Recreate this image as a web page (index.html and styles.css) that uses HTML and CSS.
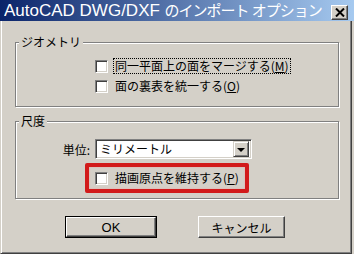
FILE: index.html
```html
<!DOCTYPE html>
<html>
  <head>
    <meta charset="utf-8">
    <title>AutoCAD DWG/DXF のインポート オプション</title>
    <link rel="stylesheet" href="styles.css">
  </head>
  <body>
    <div class="titlebar">
      <span class="caption">AutoCAD DWG/DXF <span class="jp">のインポート オプション</span></span>
      <span class="close">
        <svg width="10" height="9" viewBox="0 0 10 9"><path d="M1 0.5 L9 8.5 M9 0.5 L1 8.5" stroke="#000" stroke-width="2"/></svg>
      </span>
    </div>
    <div class="frame">
      <fieldset class="group g1">
        <legend>ジオメトリ</legend>
        <div class="row">
          <span class="check"></span>
          <span class="label focus">同一平面上の面をマージする(<u>M</u>)</span>
        </div>
        <div class="row">
          <span class="check"></span>
          <span class="label">面の裏表を統一する(<u>O</u>)</span>
        </div>
      </fieldset>
      <fieldset class="group g2">
        <legend>尺度</legend>
        <div class="unit">
          <span class="unit-label">単位:</span>
          <span class="select">
            <span class="value">ミリメートル</span>
            <span class="drop"><span class="arrow"></span></span>
          </span>
        </div>
        <div class="mark">
          <div class="row">
            <span class="check"></span>
            <span class="label">描画原点を維持する(<u>P</u>)</span>
          </div>
        </div>
      </fieldset>
      <div class="buttons">
        <span class="btn default"><span class="face">OK</span></span>
        <span class="btn cancel"><span class="face">キャンセル</span></span>
      </div>
    </div>
  </body>
</html>
```

FILE: styles.css
```css
body {
  margin:0;
  width:354px;
  height:254px;
  overflow:hidden;
  background:#d4d0c8;
  font-family:"Noto Sans CJK JP", "Liberation Sans", sans-serif;
  font-size:12px;
  color:#000;
}
.titlebar {
  height:21px;
  display:flex;
  align-items:center;
  background:linear-gradient(to right, #0a246a, #a6caf0);
  padding:0 6px 0 4px;
}
.caption {
  flex:1;
  color:#fff;
  font-family:"Liberation Sans", "Noto Sans CJK JP", sans-serif;
  font-size:17px;
  line-height:21px;
  white-space:nowrap;
  overflow:hidden;
}
.caption .jp {
  font-size:15px;
  letter-spacing:-1px;
}
.close {
  width:17px;
  height:15px;
  margin-top:4px;
  box-sizing:border-box;
  background:#d4d0c8;
  border:1px solid;
  border-color:#fff #404040 #404040 #fff;
  box-shadow:inset -1px -1px #808080;
  display:flex;
  align-items:center;
  justify-content:center;
}
.frame {
  width:352px;
  height:233px;
  box-sizing:border-box;
  border-left:1px solid #d4d0c8;
  border-right:1px solid #404040;
  border-bottom:1px solid #404040;
  box-shadow:inset 1px 0 #fff, inset -1px -1px #808080;
  display:flow-root;
}
.group {
  margin:14px 12px 0 14px;
  padding:0 0 12px 0;
  border:1px solid #808080;
  box-shadow:inset 1px 1px #fff, 1px 1px #fff;
}
.group legend {
  margin-left:3px;
  padding:0 2px;
  line-height:14px;
  background:#d4d0c8;
}
.g1 {
  padding-top:9px;
}
.g1 .row {
  margin-left:79px;
}
.g2 {
  margin-top:7px;
  padding:11px 0 5px 0;
}
.row {
  display:flex;
  align-items:center;
  height:16px;
}
.row + .row {
  margin-top:4px;
}
.check {
  width:13px;
  height:13px;
  box-sizing:border-box;
  background:#fff;
  border:1px solid;
  border-color:#808080 #fff #fff #808080;
  box-shadow:inset 1px 1px #404040, inset -1px -1px #d4d0c8;
  margin-right:5px;
}
.label {
  line-height:14px;
  padding:0 1px;
  border:1px solid transparent;
  white-space:nowrap;
}
.label.focus {
  border:1px dotted #000;
}
.unit {
  display:flex;
  align-items:center;
}
.unit-label {
  width:73px;
  margin-left:1px;
  margin-right:5px;
  text-align:right;
}
.select {
  width:157px;
  height:20px;
  box-sizing:border-box;
  background:#fff;
  border:1px solid;
  border-color:#808080 #fff #fff #808080;
  box-shadow:inset 1px 1px #404040, inset -1px -1px #d4d0c8;
  display:flex;
  align-items:center;
  justify-content:space-between;
  padding:2px;
}
.value {
  padding-left:2px;
  line-height:14px;
}
.drop {
  width:16px;
  height:16px;
  box-sizing:border-box;
  background:#d4d0c8;
  border:1px solid;
  border-color:#d4d0c8 #404040 #404040 #d4d0c8;
  box-shadow:inset 1px 1px #fff, inset -1px -1px #808080;
  display:flex;
  align-items:center;
  justify-content:center;
}
.arrow {
  width:0;
  height:0;
  border-left:4px solid transparent;
  border-right:4px solid transparent;
  border-top:4px solid #000;
  margin-top:1px;
}
.mark {
  width:164px;
  height:30px;
  box-sizing:border-box;
  margin:4px 0 0 69px;
  border:4px solid #d21a1a;
  border-radius:2px;
  box-shadow:inset 0 0 2px #f0a0a0;
  padding:0 0 0 6px;
  display:flex;
  align-items:center;
}
.buttons {
  display:flex;
  margin:17px 0 0 64px;
  gap:41px;
}
.btn {
  height:22px;
  box-sizing:border-box;
  display:flex;
}
.btn .face {
  flex:1;
  display:flex;
  align-items:center;
  justify-content:center;
  border:1px solid;
  border-color:#fff #404040 #404040 #fff;
  box-shadow:inset -1px -1px #808080;
  background:#d4d0c8;
}
.default {
  width:92px;
  border:1px solid #000;
  font-family:"Liberation Sans", sans-serif;
  font-size:13px;
}
.cancel {
  width:87px;
}
```
